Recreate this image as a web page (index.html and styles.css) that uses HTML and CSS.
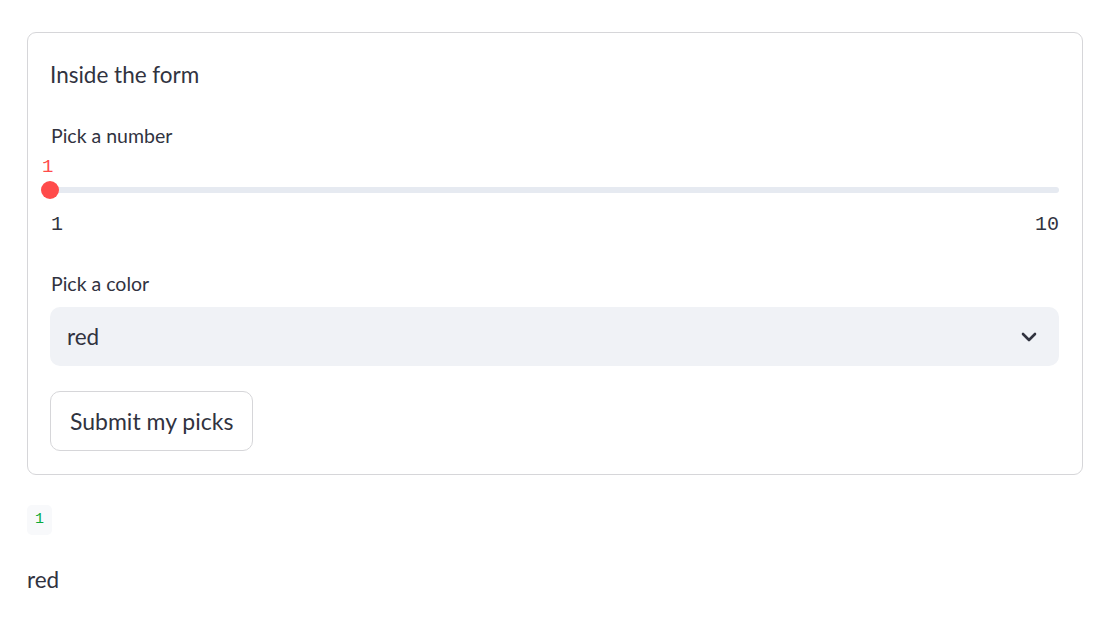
FILE: index.html
```html
<!DOCTYPE html>
<html>
<head>
<meta charset="utf-8">
<link rel="stylesheet" href="styles.css">
</head>
<body>
<main class="page">
  <form class="form">
    <p class="title">Inside the form</p>
    <div class="field slider-field">
      <label class="label">Pick a number</label>
      <div class="slider">
        <div class="slider-value">1</div>
        <div class="track-wrap">
          <div class="track"></div>
          <div class="thumb"></div>
        </div>
        <div class="ticks"><span>1</span><span>10</span></div>
      </div>
    </div>
    <div class="field">
      <label class="label">Pick a color</label>
      <div class="select">
        <span>red</span>
        <svg class="chev" width="16" height="10" viewBox="0 0 16 10"><path d="M2 2 L8 8 L14 2" fill="none" stroke="#31333f" stroke-width="2.6" stroke-linecap="round" stroke-linejoin="round"/></svg>
      </div>
    </div>
    <div class="actions">
      <button type="button" class="btn">Submit my picks</button>
    </div>
  </form>
  <div class="out-code"><code>1</code></div>
  <p class="out-text">red</p>
</main>
</body>
</html>
```
FILE: styles.css
```css
* { box-sizing: border-box; }
html, body { margin: 0; background: #fff; }
body {
  font-family: "Source Sans Pro", "Lato", "Noto Sans", sans-serif;
  color: #31333f;
}
.page {
  width: 1056px;
  margin-left: 27px;
  padding-top: 32px;
}
.form {
  border: 1px solid #d6d6d9;
  border-radius: 9px;
  padding: 26px 23px 23px 22px;
  display: flex;
  flex-direction: column;
}
.title {
  margin: 0;
  font-size: 22.5px;
  line-height: 32px;
}
.field { display: flex; flex-direction: column; }
.slider-field { margin-top: 33px; }
.label {
  font-size: 19.5px;
  line-height: 24px;
  padding-left: 1px;
}
.slider { display: flex; flex-direction: column; }
.slider-value {
  font-family: "Liberation Mono", monospace;
  font-size: 19px;
  line-height: 22px;
  color: #ff4b4b;
  margin-top: 8px;
  margin-left: -8px;
}
.track-wrap {
  position: relative;
  height: 18px;
  margin-top: 3px;
}
.track {
  position: absolute;
  left: 0; right: 0; top: 6px;
  height: 6px;
  border-radius: 3px;
  background: #e6eaf1;
}
.thumb {
  position: absolute;
  left: -9px; top: 0;
  width: 18px; height: 18px;
  border-radius: 50%;
  background: #ff4b4b;
}
.ticks {
  display: flex;
  justify-content: space-between;
  font-family: "Liberation Mono", monospace;
  font-size: 20px;
  line-height: 24px;
  margin-top: 14px;
  padding-left: 1px;
}
.field + .field { margin-top: 35px; }
.select {
  margin-top: 11px;
  height: 59px;
  background: #f0f2f6;
  border-radius: 10px;
  display: flex;
  align-items: center;
  justify-content: space-between;
  padding: 0 22px 0 17px;
  font-size: 22.5px;
}
.chev { display: block; }
.actions { margin-top: 25px; }
.btn {
  font-family: inherit;
  font-size: 23px;
  color: #31333f;
  background: #fff;
  border: 1px solid #d6d6d9;
  border-radius: 10px;
  height: 60px;
  padding: 0 19px;
}
.out-code {
  margin-top: 30px;
  display: flex;
}
.out-code code {
  font-family: "Liberation Mono", monospace;
  font-size: 15px;
  line-height: 30px;
  width: 25px;
  text-align: center;
  background: #f8f9fb;
  color: #09ab3b;
  border-radius: 5px;
}
.out-text {
  margin: 29px 0 0 0;
  font-size: 22.5px;
  line-height: 32px;
}
```
